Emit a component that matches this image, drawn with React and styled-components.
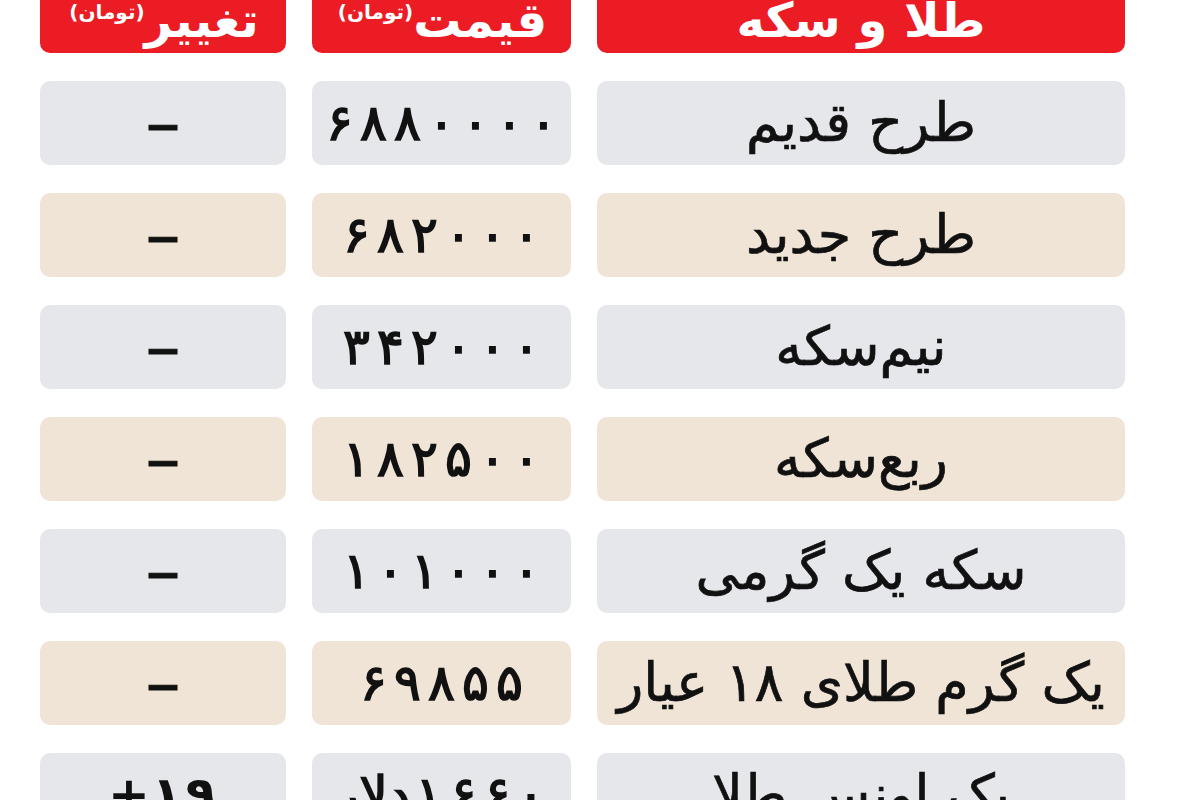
import React from "react";
import styled, { createGlobalStyle } from "styled-components";

const Global = createGlobalStyle`
  html, body { margin: 0; padding: 0; background: #ffffff; overflow: hidden; }
  body { font-family: "DejaVu Sans", "Noto Sans", sans-serif; }
`;

const Page = styled.div`
  width: 1200px;
  height: 800px;
  overflow: hidden;
  background: #fff;
`;

const Table = styled.div`
  direction: rtl;
  display: grid;
  grid-template-columns: 528px 259px 246px;
  column-gap: 26px;
  row-gap: 28px;
  padding-right: 75px;
  margin-top: -37px;
`;

const HeadCell = styled.div`
  height: 90px;
  background: #ec1c24;
  border-radius: 10px;
  display: flex;
  align-items: flex-end;
  justify-content: center;
  padding-bottom: 9px;
  box-sizing: border-box;
  color: #fff;
`;

const HeadTitle = styled.span`
  font-family: "DejaVu Sans", sans-serif;
  font-weight: bold;
  font-size: 48px;
  line-height: 1;
`;

const HeadUnit = styled.span`
  font-family: "DejaVu Sans", sans-serif;
  font-weight: bold;
  font-size: 20px;
  line-height: 1;
  align-self: flex-start;
  margin-top: 39px;
  margin-left: 2px;
`;

const Cell = styled.div`
  height: 84px;
  border-radius: 10px;
  background: ${(p) => (p.$tone === "beige" ? "#f0e4d6" : "#e6e7ea")};
  display: flex;
  align-items: center;
  justify-content: center;
  color: #111;
  font-family: "DejaVu Sans", sans-serif;
`;

const Name = styled.span`
  font-size: 54px;
  line-height: 1;
  white-space: nowrap;
  -webkit-text-stroke: 0.7px #111;
`;

const Price = styled.span`
  direction: ltr;
  display: flex;
  align-items: baseline;
  font-size: 50px;
  line-height: 1;
  white-space: nowrap;
  -webkit-text-stroke: 1.6px #111;
`;

const Digit = styled.span`
  display: inline-block;
  width: 34px;
  text-align: center;
`;

const Unit = styled.span`
  margin-right: 2px;
`;

const Change = styled.span`
  direction: ltr;
  display: flex;
  align-items: baseline;
  font-size: ${(p) => (p.$dash ? "70px" : "50px")};
  font-weight: ${(p) => (p.$dash ? "normal" : "bold")};
  line-height: 1;
  -webkit-text-stroke: ${(p) => (p.$dash ? "0.8px #111" : "0")};
`;

const rows = [
  { name: "طرح قدیم", price: "۶۸۸۰۰۰۰", change: "–" },
  { name: "طرح جدید", price: "۶۸۲۰۰۰", change: "–" },
  { name: "نیم‌سکه", price: "۳۴۲۰۰۰", change: "–" },
  { name: "ربع‌سکه", price: "۱۸۲۵۰۰", change: "–" },
  { name: "سکه یک گرمی", price: "۱۰۱۰۰۰", change: "–" },
  { name: "یک گرم طلای ۱۸ عیار", price: "۶۹۸۵۵", change: "–" },
  { name: "یک اونس طلا", price: "۱۶۶۰", unit: "دلار", change: "+۱۹" },
];

function Digits({ value }) {
  return Array.from(value).map((d, i) => <Digit key={i}>{d}</Digit>);
}

export default function App() {
  return (
    <Page>
      <Global />
      <Table>
        <HeadCell>
          <HeadTitle>طلا و سکه</HeadTitle>
        </HeadCell>
        <HeadCell>
          <HeadTitle>قیمت</HeadTitle>
          <HeadUnit>(تومان)</HeadUnit>
        </HeadCell>
        <HeadCell>
          <HeadTitle>تغییر</HeadTitle>
          <HeadUnit>(تومان)</HeadUnit>
        </HeadCell>
        {rows.map((r, i) => {
          const tone = i % 2 === 1 ? "beige" : "gray";
          const dash = r.change === "–";
          return (
            <React.Fragment key={i}>
              <Cell $tone={tone}>
                <Name>{r.name}</Name>
              </Cell>
              <Cell $tone={tone}>
                <Price>
                  {r.unit && <Unit>{r.unit}</Unit>}
                  <Digits value={r.price} />
                </Price>
              </Cell>
              <Cell $tone={tone}>
                <Change $dash={dash}>
                  {dash ? r.change : (
                    <>
                      <span>+</span>
                      <Digits value={r.change.slice(1)} />
                    </>
                  )}
                </Change>
              </Cell>
            </React.Fragment>
          );
        })}
      </Table>
    </Page>
  );
}
